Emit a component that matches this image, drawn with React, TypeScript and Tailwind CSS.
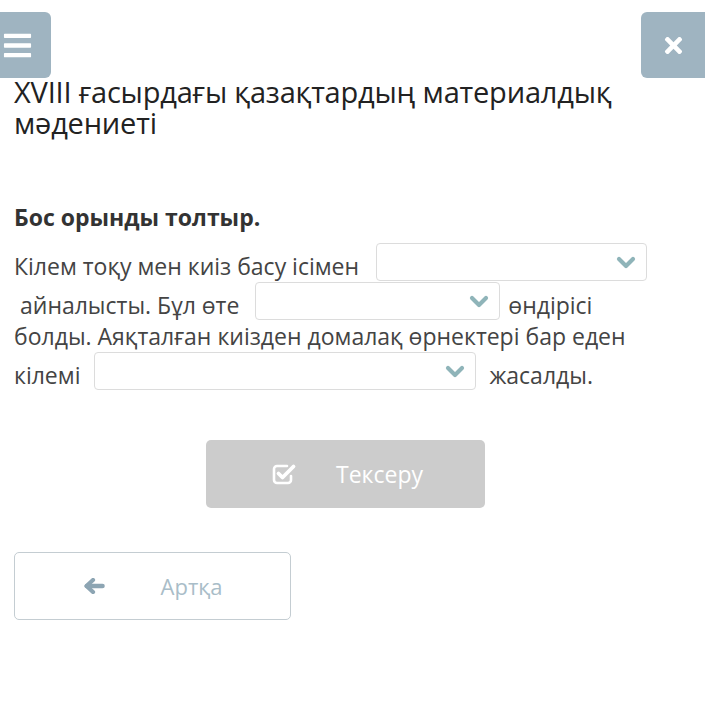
import { FaBars, FaTimes } from "react-icons/fa";

const Chevron = () => (
  <svg width="20" height="13" viewBox="0 0 20 13" className="absolute right-[10px] top-[12px]">
    <path d="M3 3 L10 10 L17 3" fill="none" stroke="#8fb4b9" strokeWidth="4.2" strokeLinecap="round" strokeLinejoin="round" />
  </svg>
);

// blank dropdown sitting in the sentence
const Blank = ({ width, extra }: { width: string; extra: string }) => (
  <span
    className={`relative inline-block h-[38px] ${width} ${extra} rounded-[4px] border border-[#dcdcdc] bg-white align-[-6px]`}
  >
    <Chevron />
  </span>
);

const CheckSquare = () => (
  <svg width="26" height="22" viewBox="0 0 26 22" fill="none">
    <path
      d="M15 3 H5 a3 3 0 0 0 -3 3 V17 a3 3 0 0 0 3 3 H16 a3 3 0 0 0 3 -3 V13"
      stroke="white"
      strokeWidth="2.6"
      strokeLinecap="round"
    />
    <path d="M6.5 10.5 L10.5 14.5 L21.5 3.5" stroke="white" strokeWidth="3.8" strokeLinecap="round" strokeLinejoin="round" />
  </svg>
);

const ArrowLeft = () => (
  <svg width="22" height="16" viewBox="0 0 22 16" fill="none">
    <path d="M10 2 L3.5 8 L10 14" stroke="#8da5b3" strokeWidth="4.2" strokeLinecap="round" strokeLinejoin="round" />
    <path d="M4 8 H19.5" stroke="#8da5b3" strokeWidth="4.6" strokeLinecap="round" />
  </svg>
);

export default function App() {
  return (
    <div className="h-[705px] w-[705px] overflow-hidden bg-white font-['Open_Sans',sans-serif]">
      <div className="flex items-start justify-between pt-[12px]">
        <button className="flex h-[66px] w-[51px] items-center rounded-r-[6px] bg-[#9fb4c1] pl-[2px] text-white">
          <FaBars className="text-[31px]" />
        </button>
        <button className="flex h-[66px] w-[64px] items-center justify-center rounded-l-[6px] bg-[#9fb4c1] text-white">
          <FaTimes className="text-[25px]" />
        </button>
      </div>

      <h1 className="-mt-[2px] px-[14px] text-[29px] leading-[31px] tracking-[-0.2px] text-[#222]">
        XVIII ғасырдағы қазақтардың материалдық мәдениеті
      </h1>

      <h2 className="mt-[64px] px-[14px] text-[23px] font-bold leading-[30px] text-[#333]">Бос орынды толтыр.</h2>

      <p className="mt-[11px] pl-[14px] text-[23px] leading-[31px] text-[#444]">
        Кілем тоқу мен киіз басу ісімен <Blank width="w-[271px]" extra="ml-[11px]" />
        <br />
        &nbsp;айналысты. Бұл өте <Blank width="w-[245px]" extra="ml-[10px] mr-[2px]" /> өндірісі
        <br />
        болды. Аяқталған киізден домалақ өрнектері бар еден
        <br />
        кілемі <Blank width="w-[382px]" extra="ml-[8px] mr-[7px]" /> жасалды.
      </p>

      <div className="mt-[49px] flex justify-center pr-[14px]">
        <button className="flex h-[68px] w-[279px] items-center justify-center gap-[38px] rounded-[5px] bg-[#cccccc] pl-[4px] text-[23px] text-white">
          <CheckSquare />
          <span>Тексеру</span>
        </button>
      </div>

      <div className="mt-[44px] px-[14px]">
        <button className="flex h-[68px] w-[277px] items-center justify-center gap-[56px] rounded-[5px] border border-[#c4cdd2] bg-white text-[22px] text-[#a9bdc8]">
          <ArrowLeft />
          <span>Артқа</span>
        </button>
      </div>
    </div>
  );
}
